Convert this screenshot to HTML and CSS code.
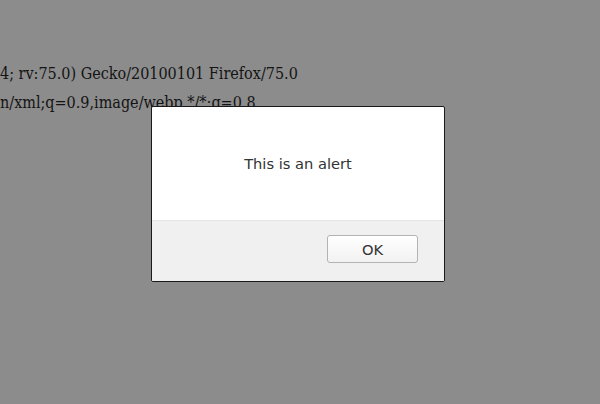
FILE: index.html
```html
<!DOCTYPE html>
<html>
<head>
<meta charset="utf-8">
<link rel="stylesheet" href="styles.css">
</head>
<body>
<div class="page">
  <p class="line line-first">4; rv:75.0) Gecko/20100101 Firefox/75.0</p>
  <p class="line">n/xml;q=0.9,image/webp,*/*;q=0.8</p>
</div>
<div class="dialog">
  <div class="dialog-body">This is an alert</div>
  <div class="dialog-footer">
    <button class="ok-btn">OK</button>
  </div>
</div>
</body>
</html>
```

FILE: styles.css
```css
html, body {
  margin: 0;
  padding: 0;
  width: 600px;
  height: 404px;
  overflow: hidden;
  background: #8c8c8c;
}
.page {
  padding-top: 59px;
  font-family: "DejaVu Serif Condensed", "DejaVu Serif", serif;
  font-stretch: condensed;
  font-size: 16px;
  color: #141414;
}
.line {
  margin: 0;
  line-height: 29px;
  white-space: nowrap;
}
.dialog {
  position: absolute;
  left: 151px;
  top: 106px;
  width: 292px;
  height: 174px;
  border: 1px solid #1a1a1a;
  border-radius: 2px;
  background: #fff;
  display: flex;
  flex-direction: column;
  overflow: hidden;
}
.dialog-body {
  height: 112px;
  padding-bottom: 1px;
  display: flex;
  align-items: center;
  justify-content: center;
  font-family: "DejaVu Sans", sans-serif;
  font-size: 14.66px;
  color: #333;
  border-bottom: 1px solid #e4e4e4;
}
.dialog-footer {
  flex: 1;
  background: #f0f0f0;
  display: flex;
  align-items: flex-start;
  justify-content: flex-end;
  padding-top: 14px;
  padding-right: 26px;
}
.ok-btn {
  width: 91px;
  height: 28px;
  border: 1px solid #b3b3b3;
  border-radius: 3px;
  background: linear-gradient(#ffffff, #f2f2f2);
  font-family: "DejaVu Sans", sans-serif;
  font-size: 14.66px;
  color: #333;
  padding: 0;
}
```
